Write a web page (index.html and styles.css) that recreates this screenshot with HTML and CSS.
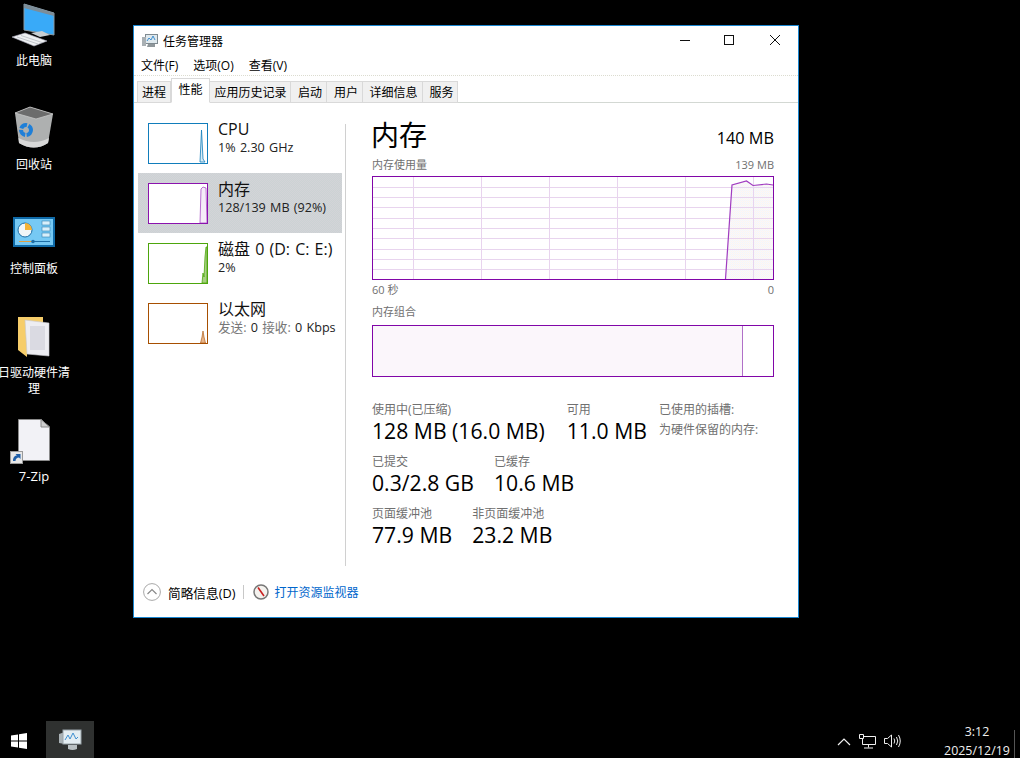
FILE: index.html
```html
<!DOCTYPE html>
<html lang="zh-CN">
<head>
<meta charset="utf-8">
<title>任务管理器</title>
<link rel="stylesheet" href="styles.css">
</head>
<body>
<div class="desktop">
  <div class="dicon">
    <svg class="dglyph" width="60" height="50" viewBox="0 0 60 50">
      <path d="M24 4 L54 13 V35 L24 30Z" fill="#39aaf8" stroke="#8c9aa3"/>
      <path d="M24 4 L54 13 V16 L24 8Z" fill="#7d8d98"/>
      <path d="M31 33 L42 31 L50 35 L40 37Z" fill="#c8ced2"/>
      <path d="M12 37 L25 33 L47 41 L34 46Z" fill="#eef0f2" stroke="#aab" stroke-width=".6"/>
      <path d="M17 37 L38 44 M21 35.500 L42 42.500" stroke="#b5bac0" stroke-width=".8"/>
    </svg>
    <span class="dlabel">此电脑</span>
  </div>
  <div class="dicon">
    <svg class="dglyph" width="60" height="50" viewBox="0 0 60 50">
      <path d="M15 9 L30 3 L53 10 L48 39 Q34 48 19 39Z" fill="#aeb0b0"/>
      <path d="M15 9 L30 3 L53 10 L36 15Z" fill="#6c6c6c" stroke="#c8c8c8" stroke-width=".8"/>
      <path d="M18.500 34 Q34 42 49 34 L48 39 Q34 48 19 39Z" fill="#d8d8d8"/>
      <circle cx="26" cy="26" r="5" fill="none" stroke="#1f7fd8" stroke-width="4" stroke-dasharray="7 1.500"/>
    </svg>
    <span class="dlabel">回收站</span>
  </div>
  <div class="dicon">
    <svg class="dglyph" width="60" height="50" viewBox="0 0 60 50">
      <g transform="translate(0 -2)">
        <rect x="13" y="11" width="42" height="30" fill="#0f6aa8"/>
        <rect x="15" y="13" width="38" height="26" fill="#76c9f4"/>
        <circle cx="25" cy="24" r="7" fill="#f2f6f8" stroke="#1d6ea6"/>
        <path d="M25 24 V17 A7 7 0 0 1 32 24Z" fill="#f5b335"/>
        <rect x="42" y="15" width="8" height="4" fill="#d8effb" stroke="#357fb0" stroke-width=".6"/>
        <rect x="42" y="21" width="8" height="4" fill="#d8effb" stroke="#357fb0" stroke-width=".6"/>
        <rect x="42" y="27" width="8" height="4" fill="#d8effb" stroke="#357fb0" stroke-width=".6"/>
        <path d="M19 35.500 H33" stroke="#e0a040"/>
        <path d="M33 35.500 H50" stroke="#1d6ea6"/>
        <circle cx="33" cy="35.500" r="1.800" fill="#1d6ea6"/>
      </g>
    </svg>
    <span class="dlabel">控制面板</span>
  </div>
  <div class="dicon">
    <svg class="dglyph" width="60" height="50" viewBox="0 0 60 50">
      <path d="M18 5 H43 V11 H49 V42 H27 V45 L18 38Z" fill="#f6cd6a"/>
      <path d="M25 8 L49 11 V44 L27 42Z" fill="#ededf2" stroke="#c8c8cc" stroke-width=".6"/>
      <rect x="30" y="14" width="15" height="24" fill="#dadae2"/>
    </svg>
    <span class="dlabel">日驱动硬件清理</span>
  </div>
  <div class="dicon">
    <svg class="dglyph" width="60" height="50" viewBox="0 0 60 50">
      <g transform="translate(0 -2)">
        <path d="M18.500 5.500 H41 L49.500 13 V46.500 H18.500Z" fill="#f2f2f6" stroke="#8a8a8a"/>
        <path d="M41 5.500 V13 H49.500Z" fill="#cfcfcf" stroke="#8a8a8a"/>
        <rect x="10.500" y="37.500" width="12" height="12" fill="#e8e8e8" stroke="#9a9a9a"/>
        <path d="M13 47 C13 43 15 41.500 17 41.500 L15.500 40 H20.500 V45 L19 43.500 C17 43.500 15.500 45 15.500 47Z" fill="#1f5fa8"/>
      </g>
    </svg>
    <span class="dlabel latin">7-Zip</span>
  </div>
</div>

<div class="window">
  <div class="titlebar">
    <svg class="appicon" width="18" height="16" viewBox="0 0 18 16">
      <rect x="4.500" y="1.500" width="12" height="9" fill="#dfe9ee" stroke="#7f8a90"/>
      <path d="M6 8 L8 5 L10 7 L12 3 L14 7" fill="none" stroke="#3f8fd0"/>
      <path d="M1 4 H5 V13 H1Z" fill="#a9b0b4"/>
      <path d="M7 11 H14 V14 H6Z" fill="#8f979b"/>
    </svg>
    <span class="titletext">任务管理器</span>
    <div class="controls">
      <span class="ctl ctl-min"><svg width="12" height="12" viewBox="0 0 12 12"><path d="M1 6.500 H11" stroke="#111"/></svg></span>
      <span class="ctl"><svg width="12" height="12" viewBox="0 0 12 12"><rect x="1.500" y="1.500" width="9" height="9" fill="none" stroke="#111"/></svg></span>
      <span class="ctl"><svg width="12" height="12" viewBox="0 0 12 12"><path d="M1 1 L11 11 M11 1 L1 11" stroke="#111"/></svg></span>
    </div>
  </div>
  <div class="menubar">
    <span class="menuitem">文件(F)</span>
    <span class="menuitem">选项(O)</span>
    <span class="menuitem">查看(V)</span>
  </div>
  <div class="tabs">
    <span class="tab t-33">进程</span>
    <span class="tab active t-39">性能</span>
    <span class="tab t-81">应用历史记录</span>
    <span class="tab t-36">启动</span>
    <span class="tab t-36">用户</span>
    <span class="tab t-60">详细信息</span>
    <span class="tab t-35">服务</span>
  </div>
  <div class="content">
    <div class="sidebar">
      <div class="item">
        <svg class="mini" width="60" height="41" viewBox="0 0 60 41">
          <path d="M52 39 L53.500 7 L55 36 L57 39Z" fill="#d9ecf6" stroke="#117dbb" stroke-width=".8"/>
          <rect x=".5" y=".5" width="59" height="40" fill="none" stroke="#117dbb"/>
        </svg>
        <div class="itemtext"><div class="itemtitle">CPU</div><div class="itemsub">1% 2.30 GHz</div></div>
      </div>
      <div class="item selected">
        <svg class="mini" width="60" height="41" viewBox="0 0 60 41">
          <rect x=".5" y=".5" width="59" height="40" fill="#fff"/>
          <path d="M52 40 L53 6 L55 4 L58 5 L59 40Z" fill="#f5ecf8" stroke="#a94fc6" stroke-width=".8"/>
          <rect x=".5" y=".5" width="59" height="40" fill="none" stroke="#8b12ae"/>
        </svg>
        <div class="itemtext"><div class="itemtitle">内存</div><div class="itemsub">128/139 MB (92%)</div></div>
      </div>
      <div class="item">
        <svg class="mini" width="60" height="41" viewBox="0 0 60 41">
          <path d="M54 40 L55 30 L56 34 L57 14 L58 4 L59 4 V40Z" fill="#a8d083" stroke="#4da60c" stroke-width=".8"/>
          <rect x=".5" y=".5" width="59" height="40" fill="none" stroke="#4da60c"/>
        </svg>
        <div class="itemtext"><div class="itemtitle">磁盘 0 (D: C: E:)</div><div class="itemsub">2%</div></div>
      </div>
      <div class="item">
        <svg class="mini" width="60" height="41" viewBox="0 0 60 41">
          <path d="M52.500 40 L54 34 L55 28 L56 34 L57.500 40Z" fill="#e7b48a" stroke="#a74f01" stroke-width=".6"/>
          <rect x=".5" y=".5" width="59" height="40" fill="none" stroke="#a74f01"/>
        </svg>
        <div class="itemtext"><div class="itemtitle">以太网</div><div class="itemsub"><span class="muted">发送:</span> 0 <span class="muted">接收:</span> 0 Kbps</div></div>
      </div>
    </div>
    <div class="divider"></div>
    <div class="main">
      <div class="headrow"><span class="heading">内存</span><span class="total">140 MB</span></div>
      <div class="caprow small"><span>内存使用量</span><span>139 MB</span></div>
      <svg class="chart" width="402" height="104" viewBox="0 0 402 104">
        <defs>
          <pattern id="dither" width="2" height="2" patternUnits="userSpaceOnUse">
            <rect width="2" height="2" fill="#faf5fb"/>
            <rect width="1" height="1" fill="#f3f8f8"/>
            <rect x="1" y="1" width="1" height="1" fill="#fbf8ee"/>
          </pattern>
        </defs>
        <path d="M353.500 103 L360 9 L374.500 5 L381 9.500 L394.500 8 L401 9 V103Z" fill="url(#dither)"/>
        <g stroke="#e8d4ee" fill="none">
          <path d="M1 11.500 H401 M1 21.500 H401 M1 31.500 H401 M1 42.500 H401 M1 52.500 H401 M1 62.500 H401 M1 73.500 H401 M1 83.500 H401 M1 93.500 H401"/>
          <path d="M41.500 1 V103 M109.500 1 V103 M177.500 1 V103 M245.500 1 V103 M313.500 1 V103 M381.500 1 V103"/>
        </g>
        <path d="M353.500 103 L360 9 L374.500 5 L381 9.500 L394.500 8 L401 9" fill="none" stroke="#a03cc0" stroke-width="1.200"/>
        <rect x=".5" y=".5" width="401" height="103" fill="none" stroke="#8106a8"/>
      </svg>
      <div class="caprow axis small"><span>60 秒</span><span>0</span></div>
      <div class="compcap small">内存组合</div>
      <div class="compbar"><div class="compused"></div></div>
      <div class="stats">
        <div class="statrow statrow-first">
          <div class="stat"><div class="slabel">使用中(已压缩)</div><div class="svalue">128 MB (16.0 MB)</div></div>
          <div class="stat"><div class="slabel">可用</div><div class="svalue">11.0 MB</div></div>
          <div class="statnotes"><div class="slabel">已使用的插槽:</div><div class="slabel">为硬件保留的内存:</div></div>
        </div>
        <div class="statrow">
          <div class="stat"><div class="slabel">已提交</div><div class="svalue">0.3/2.8 GB</div></div>
          <div class="stat"><div class="slabel">已缓存</div><div class="svalue">10.6 MB</div></div>
        </div>
        <div class="statrow">
          <div class="stat"><div class="slabel">页面缓冲池</div><div class="svalue">77.9 MB</div></div>
          <div class="stat"><div class="slabel">非页面缓冲池</div><div class="svalue">23.2 MB</div></div>
        </div>
      </div>
    </div>
  </div>
  <div class="footer">
    <svg width="18" height="18" viewBox="0 0 18 18"><circle cx="9" cy="9" r="8.400" fill="none" stroke="#a8a8a8"/><path d="M4.500 11 L9 6.500 L13.500 11" fill="none" stroke="#888" stroke-width="1.200"/></svg>
    <span class="fewer">简略信息(D)</span>
    <span class="footsep"></span>
    <svg width="16" height="16" viewBox="0 0 16 16"><circle cx="8" cy="8" r="7" fill="#f4f2ee" stroke="#777" stroke-width="1.500"/><path d="M5 3.500 L11 12" stroke="#c82020" stroke-width="1.600"/></svg>
    <span class="link">打开资源监视器</span>
  </div>
</div>

<div class="taskbar">
  <svg class="start" width="17" height="16" viewBox="0 0 17 16"><path d="M0 2.500 L7 1.500 V7.500 H0Z M8 1.300 L16 0 V7.500 H8Z M0 8.500 H7 V14.500 L0 13.500Z M8 8.500 H16 V16 L8 14.700Z" fill="#fff"/></svg>
  <div class="appbtn">
    <svg width="24" height="22" viewBox="0 0 24 22">
      <path d="M1 5 L7 3 V15 L1 14Z" fill="#aab2b6"/>
      <rect x="5" y="1" width="18" height="14" fill="#e4edf2" stroke="#9aa4a9"/>
      <path d="M7 11 L10 6 L12 10 L15 4 L18 10 L20 8" fill="none" stroke="#3f8fd0"/>
      <path d="M10 16 H19 V20 Q14.500 22 10 20Z" fill="#b9c0c3"/>
    </svg>
  </div>
  <div class="tray">
    <svg width="14" height="9" viewBox="0 0 14 9"><path d="M1 8 L7 2 L13 8" fill="none" stroke="#f0f0f0" stroke-width="1.200"/></svg>
    <svg width="17" height="15" viewBox="0 0 17 15"><path d="M.5.500 H4.500 V4.500 H.5Z M4.500 2.500 H16.500 V10.500 H3.500 V4.500 M9.500 10.500 V13.500 M5 14 H14" fill="none" stroke="#f0f0f0"/></svg>
    <svg width="17" height="14" viewBox="0 0 17 14"><path d="M.5 4.500 H3.500 L7.500 1 V13 L3.500 9.500 H.5Z M10 4.500 Q11.500 7 10 9.500 M12.500 3 Q15 7 12.500 11 M14.500 1 Q18 7 14.500 13" fill="none" stroke="#f0f0f0"/></svg>
  </div>
  <div class="clock"><div>3:12</div><div>2025/12/19</div></div>
  <div class="showdesk"></div>
</div>
</body>
</html>
```
FILE: styles.css
```css
* { box-sizing: border-box; }
html, body { margin: 0; height: 100%; }
body {
  position: relative;
  width: 1020px;
  height: 758px;
  overflow: hidden;
  background: #000;
  font-family: "Open Sans", "Noto Sans CJK SC", sans-serif;
  font-size: 12px;
  color: #000;
}
.desktop { display: flex; flex-direction: column; width: 68px; }
.dicon { height: 104px; display: flex; flex-direction: column; align-items: center; }
.dglyph { display: block; flex: none; width: 60px; height: 50px; margin-left: -8px; }
.dlabel { width: 72px; flex: none; color: #fff; text-align: center; line-height: 16px; margin-top: 3px; }
.dlabel.latin { font-size: 13px; margin-top: 2px; }

.window {
  position: absolute;
  left: 133px;
  top: 25px;
  width: 666px;
  height: 593px;
  background: #fff;
  border: 1px solid #1a86d0;
  display: flex;
  flex-direction: column;
}
.titlebar { height: 30px; flex: none; display: flex; align-items: center; }
.appicon { margin-left: 7px; }
.titletext { margin-left: 4px; margin-top: -1px; }
.controls { margin-left: auto; display: flex; margin-top: -3px; }
.ctl { width: 46px; height: 29px; display: flex; align-items: center; justify-content: center; }
.ctl-min { padding-left: 4px; }
.menubar {
  height: 20px;
  flex: none;
  display: flex;
  align-items: center;
  padding: 0 0 2px 7px;
  gap: 15px;
  border-bottom: 1px dotted #dcdcd0;
}
.tabs {
  height: 27px;
  flex: none;
  display: flex;
  align-items: flex-end;
  padding-left: 3px;
  border-bottom: 1px solid #d3d8d3;
}
.tab {
  height: 22px;
  margin-bottom: -1px;
  background: #f0f0f0;
  border: 1px solid #d9d9d9;
  border-left-width: 0;
  display: flex;
  align-items: center;
  justify-content: center;
  white-space: nowrap;
}
.tab:first-child { border-left-width: 1px; }
.tab.active { height: 25px; background: #fff; border-bottom-color: #fff; border-left-width: 1px; padding-bottom: 3px; }
.t-33 { width: 34px; }
.t-39 { width: 39px; }
.t-81 { width: 81px; padding-left: 1px; }
.t-36 { width: 36px; padding-left: 3px; }
.t-60 { width: 60px; padding-left: 2px; }
.t-35 { width: 35px; padding-left: 3px; }

.content { flex: 1; display: flex; min-height: 0; }
.sidebar { width: 211px; flex: none; padding: 10px 3px 0 4px; }
.item { height: 60px; display: flex; padding: 10px 0 0 10px; }
.item.selected { background: repeating-conic-gradient(#d4d3d8 0 25%, #cbd3d4 0 50%) 0 0 / 2px 2px; }
.mini { flex: none; display: block; }
.itemtext { margin-left: 10px; }
.itemtitle { font-size: 16px; word-spacing: 1px; line-height: 22px; margin-top: -5px; white-space: nowrap; color: #111; }
.itemsub { font-size: 12.6px; word-spacing: 1px; line-height: 18px; margin-top: -1px; white-space: nowrap; color: #222; }
.muted { color: #777; }
.divider { width: 1px; flex: none; margin: 21px 0 5px; background: #d0d0d0; }
.main { width: 402px; margin-left: 26px; flex: none; padding-top: 14px; }
.headrow { height: 38px; display: flex; justify-content: space-between; align-items: center; }
.heading { font-size: 28px; line-height: 38px; margin: -2px 0 0 -1px; }
.total { font-size: 16.3px; margin-top: 4px; }
.small { font-size: 11px; line-height: 14px; color: #707070; }
.caprow { display: flex; justify-content: space-between; margin-top: 3px; }
.chart { display: block; margin-top: 4px; }
.axis { margin-top: 3px; }
.compcap { margin-top: 8px; }
.compbar { height: 52px; margin-top: 6px; border: 1px solid #8106a8; }
.compused { width: 370px; height: 100%; background: #fbf6fb; border-right: 1px solid #b070c8; }
.stats { margin-top: 26px; display: flex; flex-direction: column; gap: 11px; }
.statrow { display: flex; gap: 20px; }
.statrow-first { gap: 22px; }
.slabel { font-size: 12px; line-height: 14px; color: #707070; white-space: nowrap; }
.svalue { font-size: 21.2px; line-height: 26px; margin-top: 1px; white-space: nowrap; color: #000; }
.statnotes { margin-left: -10px; display: flex; flex-direction: column; gap: 6px; }

.footer { height: 46px; flex: none; display: flex; align-items: center; padding: 0 0 4px 9px; }
.fewer { margin-left: 7px; font-size: 12.7px; }
.footsep { width: 1px; height: 14px; margin: 0 9px 0 8px; background: #c8c8c8; }
.link { margin-left: 5px; color: #0066cc; }

.taskbar {
  position: absolute;
  left: 0;
  right: 0;
  bottom: 0;
  height: 40px;
  display: flex;
  align-items: flex-end;
}
.start { margin: 0 18px 9px 11px; }
.appbtn {
  width: 48px;
  height: 37px;
  background: #2f3130;
  display: flex;
  align-items: center;
  justify-content: center;
}
.tray { margin: 0 39px 0 auto; display: flex; align-items: center; gap: 8px; height: 34px; }
.clock { width: 74px; margin-bottom: -2px; color: #f0f0f0; text-align: center; font-size: 12.4px; line-height: 19px; }
.showdesk { width: 1px; height: 28px; background: #555; margin-right: 5px; }
```
